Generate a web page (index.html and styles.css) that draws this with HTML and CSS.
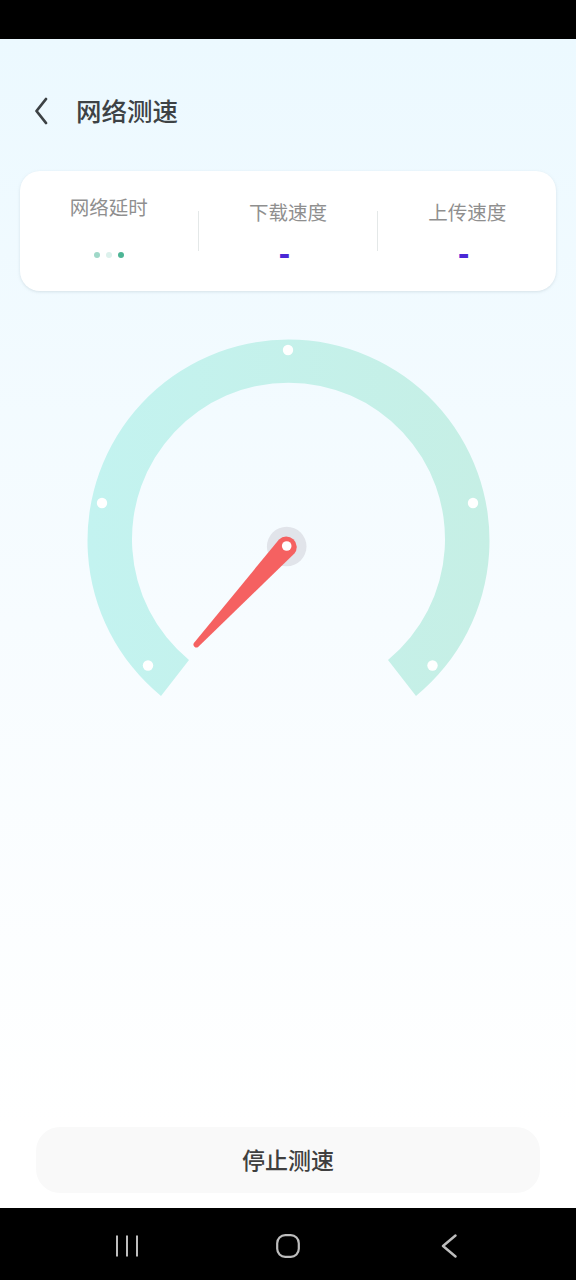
FILE: index.html
```html
<!DOCTYPE html>
<html lang="zh">
<head>
<meta charset="utf-8">
<title>网络测速</title>
<link rel="stylesheet" href="styles.css">
</head>
<body>
<div class="status-bar"></div>
<main class="screen">
  <header class="header">
    <svg class="back" viewBox="0 0 14 28" width="14" height="28"><path d="M12 2 L2.5 14 L12 26" fill="none" stroke="#3d4245" stroke-width="2.8" stroke-linecap="round" stroke-linejoin="round"/></svg>
    <h1 class="title">网络测速</h1>
  </header>
  <section class="card">
    <div class="metric metric-first">
      <div class="label">网络延时</div>
      <div class="dots"><span class="dot dot-a"></span><span class="dot dot-b"></span><span class="dot dot-c"></span></div>
    </div>
    <div class="divider"></div>
    <div class="metric">
      <div class="label">下载速度</div>
      <div class="dash">-</div>
    </div>
    <div class="divider"></div>
    <div class="metric">
      <div class="label">上传速度</div>
      <div class="dash">-</div>
    </div>
  </section>
  <svg class="gauge" viewBox="0 0 576 400" width="576" height="400">
    <defs>
      <linearGradient id="arc" x1="0" x2="1" y1="0" y2="0">
        <stop offset="0" stop-color="#c3f3f0"/>
        <stop offset="1" stop-color="#c6efe5"/>
      </linearGradient>
    </defs>
    <path d="M161 366 A201 201 0 1 1 416 366 L388 330 A156.5 156.5 0 1 0 189 330 Z" fill="url(#arc)"/>
    <g fill="#fff">
      <circle cx="288" cy="20" r="5.2"/>
      <circle cx="102" cy="173" r="5.2"/>
      <circle cx="473" cy="173" r="5.2"/>
      <circle cx="148" cy="335.500" r="5.2"/>
      <circle cx="432.500" cy="335.500" r="5.2"/>
    </g>
    <circle cx="286.7" cy="216.5" r="19.8" fill="#e1e4ea"/>
    <path d="M279 209.4 A10.5 10.5 0 0 1 294.4 223.6 L198.1 316.9 A2.9 2.9 0 0 1 193.9 313.1 Z" fill="#f56161"/>
    <circle cx="286.7" cy="216" r="4.8" fill="#fff"/>
  </svg>
  <div class="spacer"></div>
  <button class="stop">停止测速</button>
</main>
<nav class="nav-bar">
  <svg class="nav-icon" viewBox="0 0 24 24" width="24" height="24"><path d="M2 1.5V22.500M12 1.5V22.500M22 1.5V22.500" fill="none" stroke="#bdbdbd" stroke-width="2"/></svg>
  <svg class="nav-icon" viewBox="0 0 24 24" width="24" height="24"><rect x="1.200" y="1.200" width="21.600" height="21.600" rx="8" fill="none" stroke="#bdbdbd" stroke-width="2.200"/></svg>
  <svg class="nav-icon" viewBox="0 0 24 24" width="24" height="24"><path d="M18.500 1.500 L6 12 L18.500 22.500" fill="none" stroke="#bdbdbd" stroke-width="2.400" stroke-linecap="round" stroke-linejoin="round"/></svg>
</nav>
</body>
</html>
```
FILE: styles.css
```css
* { box-sizing: border-box; }
html, body { margin: 0; padding: 0; }
body {
  width: 576px;
  height: 1280px;
  display: flex;
  flex-direction: column;
  overflow: hidden;
  background: #000;
  font-family: "Noto Sans CJK SC", "Noto Sans", sans-serif;
}
.status-bar { height: 39px; background: #000; flex: none; }
.screen {
  flex: 1;
  display: flex;
  flex-direction: column;
  background: linear-gradient(180deg, #ecf9ff 0%, #f7fcff 50%, #ffffff 93%);
}
.header {
  height: 132px;
  flex: none;
  display: flex;
  align-items: center;
  padding: 12px 0 0 34px;
}
.back { display: block; flex: none; }
.title {
  margin: 0 0 3px 28px;
  font-size: 25.5px;
  line-height: 40px;
  font-weight: 500;
  color: #3d4245;
}
.card {
  flex: none;
  margin: 0 20px;
  height: 120px;
  background: #fff;
  border-radius: 20px;
  box-shadow: 0 1px 3px rgba(160, 180, 190, 0.35);
  display: flex;
  align-items: center;
}
.metric {
  flex: 1;
  height: 120px;
  display: flex;
  flex-direction: column;
  align-items: center;
  padding-top: 27px;
}
.metric-first { padding-top: 22px; }
.label {
  font-size: 19.5px;
  line-height: 28px;
  color: #8f8f8f;
  white-space: nowrap;
}
.divider { width: 1.5px; height: 40px; background: #e4e8e8; flex: none; }
.dots { display: flex; gap: 6px; margin-top: 31px; }
.dot { width: 6px; height: 6px; border-radius: 50%; }
.dot-a { background: #9fd8c8; }
.dot-b { background: #dcf1ec; }
.dot-c { background: #4db595; }
.dash {
  font-family: "Liberation Sans", sans-serif;
  font-size: 34px;
  font-weight: 700;
  line-height: 30px;
  color: #4a28d6;
  margin: 12px 7px 0 0;
}
.gauge { display: block; flex: none; margin-top: 39px; }
.spacer { flex: 1; }
.stop {
  flex: none;
  display: block;
  margin: 0 36px 15px;
  height: 66px;
  padding: 0 0 2px;
  border: none;
  border-radius: 24px;
  background: #f9f9f9;
  color: #3f3f3f;
  font-family: inherit;
  font-size: 23px;
  font-weight: 500;
}
.nav-bar {
  flex: none;
  height: 72px;
  padding: 3px 115px 0 115px;
  background: #000;
  display: flex;
  justify-content: space-between;
  align-items: center;
}
.nav-icon { display: block; flex: none; }
```
